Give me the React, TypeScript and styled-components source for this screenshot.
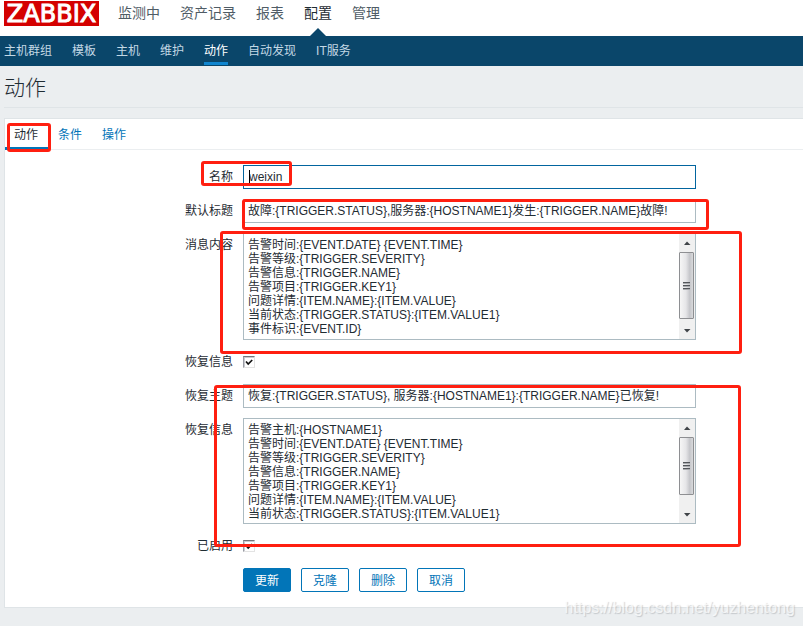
import React, { useState } from 'react';
import styled, { createGlobalStyle, css } from 'styled-components';

const GlobalStyle = createGlobalStyle`
  * { box-sizing: border-box; }
  body {
    margin: 0;
    background: #ebeef0;
    color: #1f2c33;
    font: 12px/16px "Liberation Sans", "Noto Sans CJK SC", sans-serif;
  }
  button, input, textarea { font: inherit; color: inherit; }
`;

const Page = styled.div`
  position: relative;
  min-height: 100vh;
  overflow: hidden;
`;

const TopBar = styled.header`
  display: flex;
  align-items: flex-start;
  height: 36px;
  padding: 1px 4px 0;
  background: #fff;
`;

const Logo = styled.a`
  width: 95px;
  height: 25px;
  background: #d40000;
  color: #fff;
  font: 24px/27px "DejaVu Sans", sans-serif;
  text-align: center;
  text-decoration: none;
  -webkit-text-stroke: 1px #fff;
`;

const MainMenu = styled.nav`
  display: flex;
  gap: 20px;
  height: 35px;
  margin-left: 19px;
`;

const MainLink = styled.a<{ $active?: boolean }>`
  position: relative;
  color: ${(p) => (p.$active ? '#1f2c33' : '#4f5c66')};
  font-size: 14px;
  line-height: 24px;
  text-decoration: none;
  ${(p) =>
    p.$active &&
    css`
      &::after {
        content: '';
        position: absolute;
        left: 50%;
        bottom: 0;
        margin-left: -8px;
        border: 8px solid transparent;
        border-top: 0;
        border-bottom-color: #0a466a;
      }
    `}
`;

const SubMenu = styled.nav`
  display: flex;
  gap: 20px;
  height: 30px;
  padding: 0 4px;
  background: #0a466a;
`;

const SubLink = styled.a<{ $active?: boolean }>`
  height: 29px;
  border-bottom: 3px solid ${(p) => (p.$active ? '#0f85cf' : 'transparent')};
  color: ${(p) => (p.$active ? '#fff' : '#c3d8e5')};
  line-height: 30px;
  text-decoration: none;
`;

const Main = styled.main`
  padding-left: 4px;
`;

const Title = styled.h1`
  height: 42px;
  margin: 0 0 10px;
  border-bottom: 1px solid #dfe4e7;
  color: #1f2c33;
  font-size: 21px;
  font-weight: 300;
  line-height: 44px;
`;

const Panel = styled.section`
  border: 1px solid #dfe4e7;
  border-right: 0;
  background: #fff;
`;

const TabList = styled.div`
  display: flex;
  height: 31px;
  border-bottom: 1px solid #ebeef0;
`;

const Tab = styled.button<{ $active: boolean }>`
  height: 31px;
  padding: 4px 11px 0 9px;
  border: 0;
  border-bottom: 3px solid ${(p) => (p.$active ? '#0275b8' : 'transparent')};
  background: none;
  color: ${(p) => (p.$active ? '#1f2c33' : '#0275b8')};
`;

const Form = styled.form`
  display: flex;
  flex-direction: column;
  gap: 10px;
  padding: 15px 0;
`;

const Row = styled.div`
  display: grid;
  grid-template-columns: 238px minmax(0, 1fr);
`;

const Label = styled.label`
  padding: 4px 10px 4px 0;
  text-align: right;
`;

const Field = styled.div`
  position: relative;
  display: flex;
  grid-column: 2;
  align-items: center;
  gap: 10px;
  min-height: 24px;
  padding-right: 10px;
`;

const TextInput = styled.input`
  width: 100%;
  max-width: 453px;
  height: 24px;
  padding: 0 4px 3px;
  border: 1px solid #acbbc2;
  border-radius: 0;
  outline: 0;
  background: #fff;
`;

const NameInput = styled(TextInput)`
  padding: 0 5px;
  border-color: #02659f;
`;

const Caret = styled.span`
  position: absolute;
  top: 5px;
  left: 6px;
  width: 1px;
  height: 14px;
  background: #000;
`;

const AreaFrame = styled.div<{ $height: number }>`
  display: flex;
  width: 100%;
  max-width: 453px;
  height: ${(p) => p.$height}px;
  border: 1px solid #acbbc2;
`;

const Area = styled.textarea`
  flex: 1;
  min-width: 0;
  padding: 4px;
  border: 0;
  outline: 0;
  overflow: hidden;
  resize: none;
  background: #fff;
  line-height: 14px;
  white-space: pre;
`;

const Track = styled.div`
  display: flex;
  flex-direction: column;
  align-items: flex-start;
  width: 16px;
  background: #f0f0f0;
`;

const Arrow = styled.svg`
  flex: none;
  width: 16px;
  height: 18px;
  fill: #404448;
`;

const DownArrow = styled(Arrow)`
  margin-top: auto;
`;

const Thumb = styled.div<{ $height: number }>`
  display: flex;
  flex-direction: column;
  align-items: center;
  justify-content: center;
  gap: 1px;
  width: 15px;
  height: ${(p) => p.$height}px;
  border: 1px solid #8e8f92;
  border-radius: 1px;
  background: linear-gradient(90deg, #f6f6f6, #e6e6e8 45%, #c5c6ca 75%, #d9dadc);
`;

const Grip = styled.span`
  width: 7px;
  height: 2px;
  border-top: 1px solid #53565a;
  border-bottom: 1px solid #a9abae;
`;

const Check = styled.input`
  appearance: none;
  width: 12px;
  height: 12px;
  margin: 0;
  border: 1px solid #e3e3e3;
  border-top: 1px solid #73767a;
  border-left: 1px solid #9a9ca5;
  background: #fff;
  box-shadow: inset 1px 1px #c9cbd0;
  &:checked {
    background: #fff
      url("data:image/svg+xml,%3Csvg xmlns='http://www.w3.org/2000/svg' viewBox='0 0 10 10'%3E%3Cpath d='M2 4.5 4.2 7 8.2 3' fill='none' stroke='%23111' stroke-width='1.7'/%3E%3C/svg%3E")
      center / 10px 10px no-repeat;
  }
`;

const Button = styled.button<{ $primary?: boolean }>`
  width: 48px;
  height: 24px;
  padding: 2px 0 0;
  border: 1px solid #0275b8;
  border-radius: 2px;
  background: ${(p) => (p.$primary ? '#0275b8' : '#fff')};
  color: ${(p) => (p.$primary ? '#fff' : '#0275b8')};
`;

const Mark = styled.div<{ $x: number; $y: number; $w: number; $h: number }>`
  position: absolute;
  left: ${(p) => p.$x}px;
  top: ${(p) => p.$y}px;
  width: ${(p) => p.$w}px;
  height: ${(p) => p.$h}px;
  border: 3px solid #ff1f10;
  border-radius: 3px;
  pointer-events: none;
`;

const Watermark = styled.div`
  position: absolute;
  right: 8px;
  bottom: 8px;
  color: rgba(255, 255, 255, 0.7);
  font-size: 16px;
  line-height: 20px;
  text-shadow: 1px 1px 1px rgba(140, 145, 150, 0.4);
  pointer-events: none;
`;

const mainItems = ['监测中', '资产记录', '报表', '配置', '管理'];
const subItems = ['主机群组', '模板', '主机', '维护', '动作', '自动发现', 'IT服务'];
const tabs = ['动作', '条件', '操作'];

const problemMessage = `告警时间:{EVENT.DATE} {EVENT.TIME}
告警等级:{TRIGGER.SEVERITY}
告警信息:{TRIGGER.NAME}
告警项目:{TRIGGER.KEY1}
问题详情:{ITEM.NAME}:{ITEM.VALUE}
当前状态:{TRIGGER.STATUS}:{ITEM.VALUE1}
事件标识:{EVENT.ID}`;

const recoveryMessage = `告警主机:{HOSTNAME1}
告警时间:{EVENT.DATE} {EVENT.TIME}
告警等级:{TRIGGER.SEVERITY}
告警信息:{TRIGGER.NAME}
告警项目:{TRIGGER.KEY1}
问题详情:{ITEM.NAME}:{ITEM.VALUE}
当前状态:{TRIGGER.STATUS}:{ITEM.VALUE1}`;

interface MessageAreaProps {
  id: string;
  text: string;
  height: number;
  thumb: number;
}

function MessageArea({ id, text, height, thumb }: MessageAreaProps) {
  return (
    <AreaFrame $height={height}>
      <Area id={id} defaultValue={text} spellCheck={false} />
      <Track aria-hidden="true">
        <Arrow viewBox="0 0 16 18">
          <path d="M5 11 8 7.5 11.5 11Z" />
        </Arrow>
        <Thumb $height={thumb}>
          <Grip />
          <Grip />
          <Grip />
        </Thumb>
        <DownArrow viewBox="0 0 16 18">
          <path d="M5 8 8 11.5 11.5 8Z" />
        </DownArrow>
      </Track>
    </AreaFrame>
  );
}

export default function App() {
  const [tab, setTab] = useState('动作');
  return (
    <Page>
      <GlobalStyle />
      <TopBar>
        <Logo href="#">ZABBIX</Logo>
        <MainMenu>
          {mainItems.map((item) => (
            <MainLink key={item} href="#" $active={item === '配置'}>
              {item}
            </MainLink>
          ))}
        </MainMenu>
      </TopBar>
      <SubMenu>
        {subItems.map((item) => (
          <SubLink key={item} href="#" $active={item === '动作'}>
            {item}
          </SubLink>
        ))}
      </SubMenu>
      <Main>
        <Title>动作</Title>
        <Panel>
          <TabList role="tablist">
            {tabs.map((name) => (
              <Tab
                key={name}
                type="button"
                role="tab"
                aria-selected={tab === name}
                $active={tab === name}
                onClick={() => setTab(name)}
              >
                {name}
              </Tab>
            ))}
          </TabList>
          <Form onSubmit={(e) => e.preventDefault()}>
            <Row>
              <Label htmlFor="name">名称</Label>
              <Field>
                <NameInput id="name" defaultValue="weixin" spellCheck={false} />
                <Caret />
              </Field>
            </Row>
            <Row>
              <Label htmlFor="subject">默认标题</Label>
              <Field>
                <TextInput
                  id="subject"
                  defaultValue="故障:{TRIGGER.STATUS},服务器:{HOSTNAME1}发生:{TRIGGER.NAME}故障!"
                  spellCheck={false}
                />
              </Field>
            </Row>
            <Row>
              <Label htmlFor="message">消息内容</Label>
              <Field>
                <MessageArea id="message" text={problemMessage} height={107} thumb={67} />
              </Field>
            </Row>
            <Row>
              <Label htmlFor="recovery">恢复信息</Label>
              <Field>
                <Check id="recovery" type="checkbox" defaultChecked />
              </Field>
            </Row>
            <Row>
              <Label htmlFor="recovery-subject">恢复主题</Label>
              <Field>
                <TextInput
                  id="recovery-subject"
                  defaultValue="恢复:{TRIGGER.STATUS}, 服务器:{HOSTNAME1}:{TRIGGER.NAME}已恢复!"
                  spellCheck={false}
                />
              </Field>
            </Row>
            <Row>
              <Label htmlFor="recovery-message">恢复信息</Label>
              <Field>
                <MessageArea id="recovery-message" text={recoveryMessage} height={106} thumb={58} />
              </Field>
            </Row>
            <Row>
              <Label htmlFor="enabled">已启用</Label>
              <Field>
                <Check id="enabled" type="checkbox" defaultChecked />
              </Field>
            </Row>
            <Row>
              <Field>
                <Button $primary type="submit">更新</Button>
                <Button type="button">克隆</Button>
                <Button type="button">删除</Button>
                <Button type="button">取消</Button>
              </Field>
            </Row>
          </Form>
        </Panel>
      </Main>
      <Mark $x={7} $y={123} $w={44} $h={29} />
      <Mark $x={201} $y={161} $w={91} $h={25} />
      <Mark $x={242} $y={199} $w={467} $h={31} />
      <Mark $x={220} $y={231} $w={522} $h={123} />
      <Mark $x={214} $y={385} $w={527} $h={162} />
      <Watermark>https://blog.csdn.net/yuzhentong</Watermark>
    </Page>
  );
}
